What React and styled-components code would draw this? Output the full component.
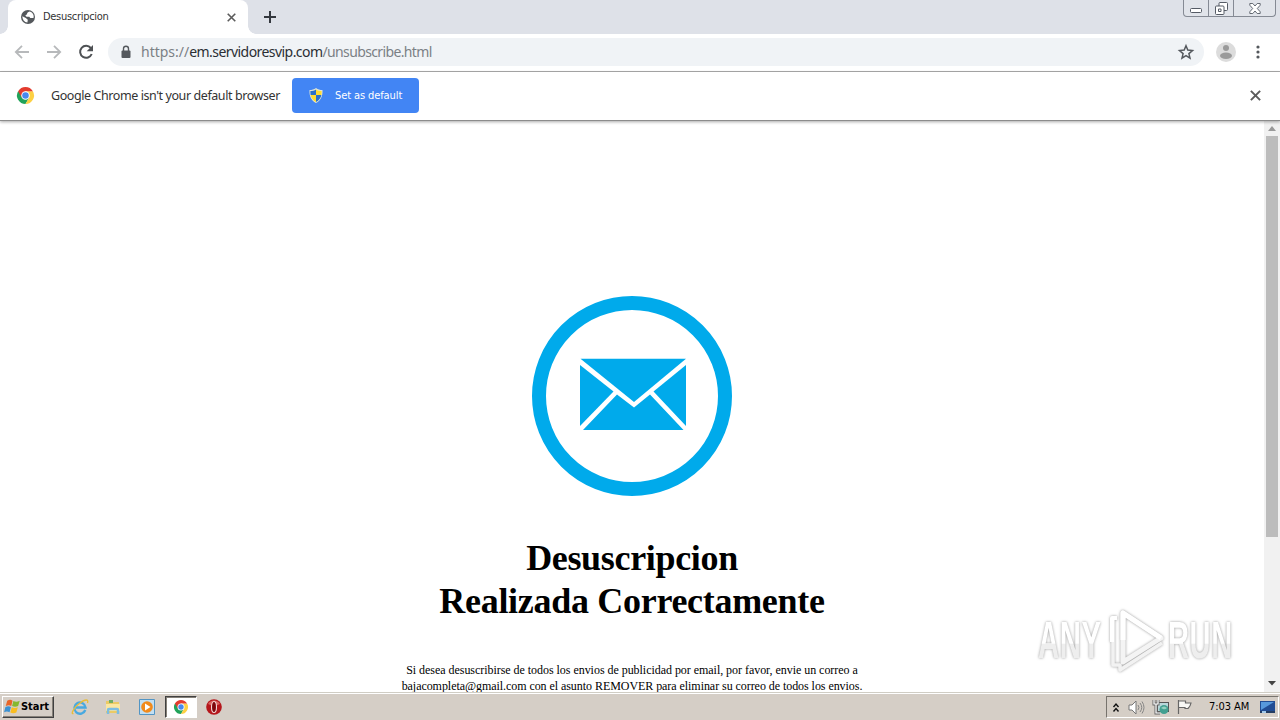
import React from "react";
import styled, { createGlobalStyle } from "styled-components";

const Global = createGlobalStyle`
  * { box-sizing: border-box; }
  body { margin: 0; overflow: hidden; background: #fff; }
`;
const ui = `"DejaVu Sans Condensed", "DejaVu Sans", sans-serif`;
const light = `"Noto Sans", sans-serif`;

const Screen = styled.div`
  width: 1280px; height: 720px; display: flex; flex-direction: column;
  position: relative; overflow: hidden; background: #fff; font-family: ${ui};
`;
const Icon = styled.svg`display: block; flex: none; overflow: visible;`;
const Label = styled.span`
  white-space: pre; font-family: ${(p) => p.$font || ui}; font-size: ${(p) => p.$size}px;
  letter-spacing: ${(p) => p.$track || 0}px; color: ${(p) => p.$color || "#333"};
  line-height: 16px;
`;

/* Tab strip */
const TabStrip = styled.div`
  height: 34px; flex: none; background: #dee1e8; display: flex; padding-left: 8px;
`;
const Tab = styled.div`
  width: 240px; height: 34px; background: #fff; border-radius: 8px 8px 0 0;
  display: flex; align-items: center; padding: 0 12px 0 13px; position: relative;
  &::before, &::after {
    content: ""; position: absolute; bottom: 0; width: 8px; height: 8px;
  }
  &::before { left: -8px; background: radial-gradient(circle at 0 0, transparent 7.5px, #fff 8px); }
  &::after { right: -8px; background: radial-gradient(circle at 100% 0, transparent 7.5px, #fff 8px); }
`;
const TabTitle = styled.div`flex: 1; padding-left: 8px; display: flex;`;
const NewTab = styled.div`padding: 11px 0 0 16px;`;
const WindowButtons = styled.div`
  margin: 0 4px 0 auto; width: 93px; height: 17px; display: flex; border: 1px solid #858a94;
  border-top: 0; border-radius: 0 0 4px 4px; background: #e1e4ea;
`;
const WindowButton = styled.div`
  width: ${(p) => p.$w}px; display: flex; align-items: center; justify-content: center;
  & + & { border-left: 1px solid #858a94; }
`;

/* Toolbar */
const Toolbar = styled.div`
  height: 38px; flex: none; display: flex; align-items: center; padding: 0 12px 1px 14px;
  border-bottom: 1px solid #acacac;
`;
const Nav = styled.div`display: flex; gap: 16px; width: 94px;`;
const Omnibox = styled.div`
  width: 1096px; height: 28px; border-radius: 14px; background: #f0f3f6; display: flex;
  align-items: center; padding: 0 10px 0 12px;
`;
const Url = styled.div`flex: 1; padding-left: 9px; display: flex;`;
const Avatar = styled.div`margin-left: 12px;`;
const Menu = styled.div`margin-left: 20px;`;

/* Default browser bar */
const InfoBar = styled.div`
  height: 49px; flex: none; display: flex; align-items: center; padding: 0 19px 1px 17px;
  border-bottom: 1px solid #8c8c8c; box-shadow: 0 1px 3px #0005; z-index: 1; background: #fff;
`;
const InfoText = styled.div`width: 241px; margin-left: 17px; display: flex;`;
const DefaultButton = styled.div`
  width: 127px; height: 35px; border-radius: 4px; background: #4285f4; display: flex;
  align-items: center; padding-left: 17px; gap: 12px;
`;
const Dismiss = styled.div`margin-left: auto;`;

/* Page */
const Viewport = styled.div`height: 571px; flex: none; display: flex;`;
const Page = styled.main`
  width: 1264px; overflow: hidden; display: flex; flex-direction: column; align-items: center;
  padding-top: 175px; font-family: "Liberation Serif", serif; color: #000; text-align: center;
`;
const Heading = styled.h1`
  margin: 41px 0 0; font-size: 36px; line-height: 43px; font-weight: 700;
`;
const HeadLine = styled.div`letter-spacing: ${(p) => p.$track}px;`;
const Note = styled.div`margin-top: 39px; font-size: 12px; line-height: 16px;`;
const NoteLine = styled.div`letter-spacing: ${(p) => p.$track}px; white-space: nowrap;`;
const Scrollbar = styled.div`
  width: 16px; background: #f1f1f1; display: flex; flex-direction: column; align-items: center;
  padding: 5px 0 6px;
`;
const Thumb = styled.div`width: 12px; height: 401px; margin-top: 5px; background: #bcbcbc;`;
const ScrollDown = styled.div`margin-top: auto;`;

/* Taskbar */
const Taskbar = styled.div`
  height: 28px; flex: none; background: #d5cec6; border-top: 1px solid #d0cdc4;
  box-shadow: inset 0 1px 0 #fff; display: flex; padding: 3px 1px 0 2px;
`;
const StartButton = styled.div`
  width: 52px; height: 22px; display: flex; align-items: center;
  background: #d5cec6; border: 1px solid; border-color: #fff #404040 #404040 #fff;
  box-shadow: inset -1px -1px 0 #858078;
`;
const QuickLaunch = styled.div`display: flex; align-items: center; margin-left: 17px; height: 22px;`;
const Launch = styled.div`width: ${(p) => p.$w || 34}px; padding-left: ${(p) => p.$inset || 0}px; display: flex; align-items: center;`;
const ActiveTask = styled.div`
  width: 32px; height: 22px; display: flex; align-items: center; justify-content: center;
  background: #fff; border: 1px solid; border-color: #404040 #fff #fff #404040;
  box-shadow: inset 1px 1px 0 #858078;
`;
const Tray = styled.div`
  margin-left: auto; width: 173px; height: 22px; display: flex; align-items: center;
  border: 1px solid; border-color: #77736d #fff #fff #77736d; padding-left: 6px;
`;
const TrayItem = styled.div`width: ${(p) => p.$w}px; display: flex;`;

/* Watermark */
const Watermark = styled.div`
  position: absolute; left: 1038px; top: 606px; width: 200px; height: 70px;
  filter: drop-shadow(0 0 1.5px #0004) drop-shadow(0 0 1px #0002);
`;
const WatermarkDrawing = styled.svg`display: block; position: absolute; left: 66px; top: 0;`;
const Word = styled.span`
  position: absolute; top: 6px; left: ${(p) => p.$x}px; font: 700 51px/58px "Liberation Sans Narrow", "Liberation Sans", sans-serif;
  transform: scaleX(${(p) => p.$scale}); transform-origin: 0 0; letter-spacing: 1px;
  background: linear-gradient(#fff 0 54%, #eee 55%); background-clip: text; color: transparent;
`;

const Chrome = ({ size }) => (
  <Icon width={size} height={size} viewBox="0 0 48 48">
    <path d="M24 24 3.2 12A24 24 0 0 0 24 48L34.4 30Z" fill="#21a35a" />
    <path d="M24 24V12h20.8A24 24 0 0 1 24 48l10.4-18Z" fill="#fdd043" />
    <path d="M24 12h20.8A24 24 0 0 0 3.2 12l10.4 18Z" fill="#e33b2e" />
    <circle cx="24" cy="24" r="12" fill="#fff" />
    <circle cx="24" cy="24" r="9.2" fill="#4789ee" />
  </Icon>
);
const Cross = ({ size, color = "#5b5b5b", width = 1.8 }) => (
  <Icon width={size} height={size} viewBox="0 0 10 10">
    <path d="m.8.8 8.4 8.4M9.2.8.8 9.2" stroke={color} strokeWidth={width} />
  </Icon>
);
const Globe = () => (
  <Icon width="14" height="14" viewBox="0 0 14 14">
    <circle cx="7" cy="7" r="7" fill="#54585c" />
    <path d="M8.5 1.6C7 2 6 3.2 6 4.3L4.3 5.5l1.2 1.2h2.8l1 1.4 3.2-.1.2-2A5.7 5.7 0 0 0 8.5 1.6ZM1.4 6.3l3.4 1.8 2 1.6-.4 2.8A5.6 5.6 0 0 1 1.4 6.3Z" fill="#fff" />
  </Icon>
);
const Arrow = ({ back }) => (
  <Icon width="16" height="16" viewBox="0 0 16 16">
    <path d={back ? "M15 8H2M8 1.8 1.8 8 8 14.2" : "M1 8h13M8 1.8 14.2 8 8 14.2"} fill="none" stroke="#b7b9bb" strokeWidth="1.8" />
  </Icon>
);
const Reload = () => (
  <Icon width="16" height="16" viewBox="0 0 16 16">
    <path d="M12.8 4A6 6 0 1 0 13.7 10" fill="none" stroke="#4e5154" strokeWidth="2" />
    <path d="M15 1v6.3H8.7Z" fill="#4e5154" />
  </Icon>
);
const Shield = () => (
  <Icon width="14" height="15" viewBox="0 0 14 15">
    <path d="M7 0c2 1.5 4 2 6.5 2 .3 6-1.5 10.500-6.500 13C2 12.500.2 8 .5 2 3 2 5 1.500 7 0Z" fill="#e0e6d7" />
    <path d="M7 1.500C5.500 2.500 3.500 3 1.400 3c0 1.500 0 2.700.2 4H7ZM7 7h5.400C11.700 10 10 12.500 7 13.900Z" fill="#2b70ca" />
    <path d="M7 1.500C8.500 2.500 10.500 3 12.600 3c0 1.500 0 2.700-.2 4H7ZM7 7H1.600C2.300 10 4 12.500 7 13.900Z" fill="#ffdc32" />
  </Icon>
);
const Envelope = () => (
  <Icon width="200" height="200" viewBox="0 0 200 200">
    <circle cx="100" cy="100" r="93" fill="none" stroke="#00aaeb" strokeWidth="14" />
    <g fill="#00aaeb">
      <path d="M48.500 62.800h105.500L102 106Z" />
      <path d="M48 69v61L81.500 95.500Z" />
      <path d="M154 69v61L121.500 95.500Z" />
      <path d="m85 98.500 17 13 16-13 33.500 35.500H51Z" />
    </g>
  </Icon>
);
const WindowsFlag = () => (
  <Icon width="18" height="18" viewBox="0 0 17 16">
    <path d="M4 2c2-1 3.500-1 5 0L7.800 7c-1.600-1-3-1-5.200 0Z" fill="#e86527" />
    <path d="M9.800 2.300c2 1 3.700 1 6-.2l-1.500 5c-2 1-3.800 1-5.700 0Z" fill="#85b82f" />
    <path d="M2.300 8c2-1 3.600-1 5.200 0l-1.300 5c-1.700-1-3.300-1-5.200 0Z" fill="#3b91d2" />
    <path d="M8.300 8.200c2 1 3.700 1 5.700 0l-1.400 5c-2 1-3.700 1-5.700 0Z" fill="#f9bd20" />
  </Icon>
);
const Explorer = () => (
  <Icon width="18" height="18" viewBox="0 0 18 18">
    <path d="M14.300 12A5.600 5.600 0 1 1 14.600 9.500H5" fill="none" stroke="#48a9e0" strokeWidth="2.300" />
    <path d="M2.500 15.500C-1 17 3 9 9 5c5-4 9-4 7.500 0" fill="none" stroke="#e9bd36" strokeWidth="1.300" />
  </Icon>
);
const Folder = () => (
  <Icon width="16" height="16" viewBox="0 0 16 16">
    <path d="M1 2h6l1 1h6v11H1Z" fill="#ebca64" />
    <path d="M4 1h4v3H4Z" fill="#70ad62" />
    <path d="M1 5h14v7H1Z" fill="#fbe7a0" />
    <path d="M3 15v-4q0-1 1-1h8q1 0 1 1v4" fill="none" stroke="#7bbde2" strokeWidth="2.500" />
  </Icon>
);
const Player = () => (
  <Icon width="16" height="16" viewBox="0 0 16 16">
    <path d="M.5.5h15v15H.500Z" fill="#c2dff2" stroke="#5295c4" />
    <circle cx="8" cy="8" r="5.800" fill="#f18a1b" />
    <path d="m6 4.500 5.500 3.500L6 11.500Z" fill="#fff" />
  </Icon>
);
const Opera = () => (
  <Icon width="16" height="16" viewBox="0 0 16 16">
    <circle cx="8" cy="8" r="7.800" fill="#b5161b" />
    <path d="M2 5a7 7 0 0 1 12 0Q8 8 2 5Z" fill="#da6460" />
    <ellipse cx="8" cy="8" rx="2.500" ry="5.500" fill="#7e070b" stroke="#f3dada" strokeWidth="1.100" />
  </Icon>
);

export default function App() {
  return (
    <Screen>
      <Global />
      <TabStrip>
        <Tab>
          <Globe />
          <TabTitle><Label $size={11} $track={-0.3}>Desuscripcion</Label></TabTitle>
          <Cross size={9} />
        </Tab>
        <NewTab>
          <Icon width="12" height="12" viewBox="0 0 12 12"><path d="M6 0v12M0 6h12" stroke="#34383e" strokeWidth="2" /></Icon>
        </NewTab>
        <WindowButtons>
          <WindowButton $w={24}>
            <Icon width="12" height="12" viewBox="0 0 12 12"><rect x=".5" y="6.500" width="11" height="4" rx="1" fill="#fff" stroke="#555b65" /></Icon>
          </WindowButton>
          <WindowButton $w={25}>
            <Icon width="13" height="13" viewBox="0 0 13 13" fill="#fff" stroke="#555b65">
              <rect x="4" y=".5" width="8.500" height="8" rx="1" /><rect x=".5" y="4" width="8.500" height="8.500" rx="1" /><path d="M3.500 7h2.500v2.500H3.500Z" />
            </Icon>
          </WindowButton>
          <WindowButton $w={42}>
            <Icon width="12" height="11" viewBox="0 0 12 11"><path d="M.8.5h3L6 3 8.200.5h3v1.700L8.300 5.500l2.900 3.300v1.700h-3L6 8l-2.200 2.500h-3V8.800l2.900-3.300L.8 2.200Z" fill="#fff" stroke="#555b65" strokeWidth=".9" /></Icon>
          </WindowButton>
        </WindowButtons>
      </TabStrip>

      <Toolbar>
        <Nav><Arrow back /><Arrow /><Reload /></Nav>
        <Omnibox>
          <Icon width="12" height="14" viewBox="0 0 12 14">
            <path d="M3.500 6V3.800a2.500 2.500 0 0 1 5 0V6" fill="none" stroke="#54585d" strokeWidth="1.400" /><rect x="1.500" y="5.500" width="9" height="7.500" rx="1" fill="#54585d" />
          </Icon>
          <Url>
            <Label $size={14} $font={light} $color="#7b8085">https://</Label>
            <Label $size={14} $font={light} $color="#2a2e33" $track={-0.56}>em.servidoresvip.com</Label>
            <Label $size={14} $font={light} $color="#7b8085" $track={-0.63}>/unsubscribe.html</Label>
          </Url>
          <Icon width="16" height="16" viewBox="0 0 16 16"><path d="m8 1.800 1.800 4.300 4.700.4-3.600 3.100 1.100 4.600-4-2.500-4 2.500 1.100-4.600-3.600-3.100 4.700-.4Z" fill="none" stroke="#54585d" strokeWidth="1.500" /></Icon>
        </Omnibox>
        <Avatar>
          <Icon width="20" height="20" viewBox="0 0 20 20"><circle cx="10" cy="10" r="10" fill="#dcdcdc" /><circle cx="10" cy="6" r="3" fill="#9a9a9a" /><ellipse cx="10" cy="13.700" rx="6" ry="3.200" fill="#9a9a9a" /></Icon>
        </Avatar>
        <Menu>
          <Icon width="4" height="14" viewBox="0 0 4 14" fill="#54585d"><circle cx="2" cy="2" r="1.600" /><circle cx="2" cy="7" r="1.600" /><circle cx="2" cy="12" r="1.600" /></Icon>
        </Menu>
      </Toolbar>

      <InfoBar>
        <Chrome size={17} />
        <InfoText><Label $size={12.5} $track={-0.42} $font={light}>Google Chrome isn't your default browser</Label></InfoText>
        <DefaultButton><Shield /><Label $size={11} $track={-0.1} $color="#fff">Set as default</Label></DefaultButton>
        <Dismiss><Cross size={11} /></Dismiss>
      </InfoBar>

      <Viewport>
        <Page>
          <Envelope />
          <Heading>
            <HeadLine $track={-0.33}>Desuscripcion</HeadLine>
            <HeadLine $track={-0.3}>Realizada Correctamente</HeadLine>
          </Heading>
          <Note>
            <NoteLine $track={-0.04}>Si desea desuscribirse de todos los envios de publicidad por email, por favor, envie un correo a</NoteLine>
            <NoteLine $track={-0.055}>bajacompleta@gmail.com con el asunto REMOVER para eliminar su correo de todos los envios.</NoteLine>
          </Note>
        </Page>
        <Scrollbar>
          <Icon width="8" height="5" viewBox="0 0 8 5"><path d="m0 5 4-5 4 5Z" fill="#999" /></Icon>
          <Thumb />
          <ScrollDown><Icon width="8" height="5" viewBox="0 0 8 5"><path d="m0 0 4 4.500L8 0Z" fill="#444" /></Icon></ScrollDown>
        </Scrollbar>
      </Viewport>

      <Taskbar>
        <StartButton>
          <WindowsFlag />
          <Label as="b" $size={11} $color="#000" $track={-0.05}>Start</Label>
        </StartButton>
        <QuickLaunch>
          <Launch><Explorer /></Launch>
          <Launch><Folder /></Launch>
          <Launch $w={26}><Player /></Launch>
          <ActiveTask><Chrome size={14} /></ActiveTask>
          <Launch $inset={9}><Opera /></Launch>
        </QuickLaunch>
        <Tray>
          <TrayItem $w={15}>
            <Icon width="6" height="9" viewBox="0 0 6 9"><path d="m.5 4 2.500-3 2.500 3M.5 8.500 3 5.500l2.500 3" fill="none" stroke="#111" strokeWidth="1.400" /></Icon>
          </TrayItem>
          <TrayItem $w={25}>
            <Icon width="17" height="15" viewBox="0 0 17 15"><path d="M1 5h3l4-4v13l-4-4H1Z" fill="#fff" stroke="#777" /><path d="M10 5q2 2.500 0 5M12 3q3.500 4.500 0 9M14 1.500q4 6 0 12" fill="none" stroke="#858585" /></Icon>
          </TrayItem>
          <TrayItem $w={24}>
            <Icon width="16" height="16" viewBox="0 0 16 16">
              <rect x="4.500" y="3.500" width="11" height="9" fill="#b8d7da" stroke="#555" /><circle cx="11" cy="10.500" r="4.500" fill="#43a091" /><path d="M8 9q3-3 6 0-2 2-4 1" fill="#95d1bf" />
              <path d="M1 1v4h4V1M3 5v9h4" fill="none" stroke="#666" strokeWidth="3" /><path d="M1 1v4h4V1M3 5v9h4" fill="none" stroke="#fff" strokeWidth="1.200" />
            </Icon>
          </TrayItem>
          <TrayItem $w={32}>
            <Icon width="16" height="16" viewBox="0 0 16 16"><path d="M1.500 1v14M2 2h6.500v2H14q-.5 3-3 5.500H8V8.500H2" fill="#f8f8f5" stroke="#666" strokeWidth="1.200" /></Icon>
          </TrayItem>
          <TrayItem $w={51}><Label $size={11} $color="#000" $track={-0.05}>7:03 AM</Label></TrayItem>
          <Icon width="15" height="13" viewBox="0 0 15 13"><path d="M0 0h15v11H0Z" fill="#214d94" /><path d="M1 1h13L1 9Z" fill="#5799dc" /><path d="M0 10h15v2H0Z" fill="#243d63" /><path d="M2 10h4v2H2Z" fill="#a0c8ea" /></Icon>
        </Tray>
      </Taskbar>

      <Watermark>
        <Word $x={0} $scale={0.575}>ANY</Word>
        <WatermarkDrawing width="64" height="70" viewBox="0 0 64 70" fill="none">
          <path d="M9 12v47h7v5l42-27" stroke="#f2f2f2" strokeWidth="3.500" strokeLinejoin="round" />
          <path d="M19 7v49l38-24L19 7Z" stroke="#f4f4f4" strokeWidth="5" strokeLinejoin="round" />
          <path d="M19 34V7l38 25" stroke="#fff" strokeWidth="5" strokeLinejoin="round" />
          <path d="M13 12H8v24" stroke="#fff" strokeWidth="4" strokeLinejoin="round" />
        </WatermarkDrawing>
        <Word $x={130} $scale={0.57}>RUN</Word>
      </Watermark>
    </Screen>
  );
}
